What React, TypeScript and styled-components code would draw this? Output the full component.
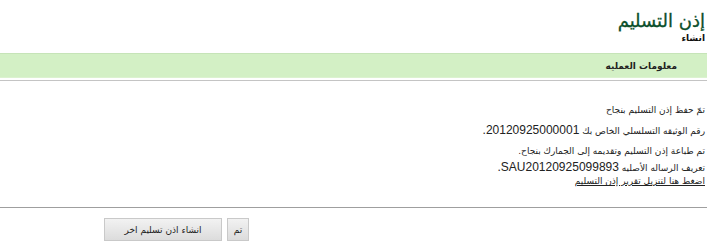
import React from "react";
import styled, { createGlobalStyle } from "styled-components";

const GlobalStyle = createGlobalStyle`
  html, body {
    margin: 0;
    padding: 0;
    background: #ffffff;
    overflow: hidden;
  }
  body {
    font-family: Tahoma, "DejaVu Sans", sans-serif;
    color: #222;
  }
`;

export default function App() {
  return (
    <>
      <GlobalStyle />
      <Page dir="rtl">
        <Header>
          <Title>إذن التسليم</Title>
          <SubTitle>انشاء</SubTitle>
        </Header>
        <SectionBar>
          <SectionTitle>معلومات العمليه</SectionTitle>
        </SectionBar>
        <Messages>
          <Line>تمّ حفظ إذن التسليم بنجاح</Line>
          <Line>
            رقم الوثيقه التسلسلي الخاص بك <Num>20120925000001.</Num>
          </Line>
          <Line>تم طباعة إذن التسليم وتقديمه إلى الجمارك بنجاح.</Line>
          <Line $pull={4}>
            تعريف الرساله الأصليه <Num>SAU20120925099893.</Num>
          </Line>
          <DownloadLink href="#">اضغط هنا لتنزيل تقرير إذن التسليم</DownloadLink>
        </Messages>
        <Divider />
        <ButtonRow>
          <Button $w={22}>تم</Button>
          <Button $w={118}>انشاء اذن تسليم اخر</Button>
        </ButtonRow>
      </Page>
    </>
  );
}

const Page = styled.div`
  width: 707px;
  height: 246px;
  direction: rtl;
`;

const Header = styled.div`
  display: flex;
  flex-direction: column;
  align-items: flex-start;
  padding: 9px 2px 0 0;
  height: 43px;
  box-sizing: border-box;
`;

const Title = styled.h1`
  margin: 0;
  font-family: Tahoma, "DejaVu Sans", sans-serif;
  font-size: 18px;
  font-weight: normal;
  -webkit-text-stroke: 0.3px #0b4f2b;
  line-height: 24px;
  color: #0b4f2b;
`;

const SubTitle = styled.div`
  font-size: 9px;
  font-weight: bold;
  line-height: 10px;
  color: #111;
`;

const SectionBar = styled.div`
  height: 25px;
  background: #d3f0c5;
  border-top: 1px solid #c6e4b8;
  border-bottom: 1px solid #dcf2d0;
  display: flex;
  align-items: center;
  padding-right: 30px;
  box-sizing: border-box;
  margin-top: 10px;
  box-shadow: 0 2px 0 #ffffff, 0 3px 0 #c4c4c4;
`;

const SectionTitle = styled.span`
  font-size: 9px;
  font-weight: bold;
  color: #222;
`;

const Messages = styled.div`
  display: flex;
  flex-direction: column;
  align-items: flex-start;
  padding: 22px 2px 0 0;
  height: 129px;
  box-sizing: border-box;
`;

const Line = styled.div<{ $pull?: number }>`
  font-size: 9px;
  line-height: 20px;
  margin-top: ${(p) => -(p.$pull ?? 0)}px;
  color: #222;
`;

const Num = styled.span`
  font-family: "Liberation Sans", Arial, sans-serif;
  font-size: 12px;
`;

const DownloadLink = styled.a`
  font-size: 9px;
  line-height: 12px;
  margin-top: -3px;
  color: #222;
  text-decoration: underline;
`;

const Divider = styled.div`
  height: 1px;
  background: #9f9f9f;
`;

const ButtonRow = styled.div`
  display: flex;
  justify-content: flex-end;
  gap: 5px;
  padding: 10px 0 0 104px;
`;

const Button = styled.button<{ $w: number }>`
  width: ${(p) => p.$w}px;
  height: 23px;
  padding: 0;
  border: 1px solid #c9c9c9;
  background: linear-gradient(#f2f2f2, #dcdcdc);
  font-family: Tahoma, "DejaVu Sans", sans-serif;
  font-size: 9px;
  color: #222;
`;
